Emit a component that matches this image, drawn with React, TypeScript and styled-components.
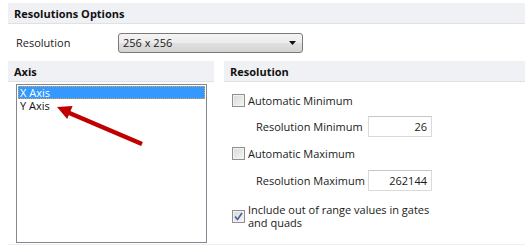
import React from 'react'
import styled, { createGlobalStyle } from 'styled-components'

const GlobalStyle = createGlobalStyle`
    html, body {
        margin: 0;
        padding: 0;
        background: #fff;
    }
    body {
        font-family: "Open Sans", "Noto Sans", sans-serif;
        font-size: 11px;
        color: #1a1a1a;
    }
`;

const Page = styled.div`
    width: 531px;
    height: 245px;
    padding: 3px 6px 0 8px;
    box-sizing: border-box;
    display: flex;
    flex-direction: column;
    overflow: hidden;
`;

const SectionHeader = styled.div`
    flex: none;
    height: 20px;
    background: #f0f1f5;
    border-bottom: 1px solid #dfe1e6;
    display: flex;
    align-items: center;
    padding-left: 6px;
    font-weight: bold;
    color: #111;
`;

const ResolutionRow = styled.div`
    flex: none;
    display: flex;
    align-items: center;
    height: 37px;
    padding-left: 8px;
`;

const RowLabel = styled.span`
    width: 102px;
`;

const Select = styled.div`
    width: 185px;
    height: 20px;
    box-sizing: border-box;
    border: 1px solid #7a7a7a;
    border-radius: 3px;
    background: linear-gradient(#f4f4f4, #ececec 50%, #e0e0e0 51%, #d4d4d4);
    display: flex;
    align-items: center;
    justify-content: space-between;
    padding: 0 6px 0 4px;
`;

const Columns = styled.div`
    flex: none;
    display: flex;
    gap: 10px;
    height: 184px;
    border-bottom: 1px solid #eceef1;
    box-sizing: border-box;
`;

const Column = styled.div<{ w: number }>`
    width: ${props => props.w}px;
    display: flex;
    flex-direction: column;
`;

const ListBox = styled.div`
    position: relative;
    margin: 2px 7px 0 8px;
    height: 159px;
    border: 1px solid #828790;
    padding: 1px;
    box-sizing: border-box;
`;

const ListItem = styled.div<{ selected?: boolean }>`
    height: 13px;
    line-height: 13px;
    padding-left: 2px;
    overflow: hidden;
    background: ${props => props.selected ? '#3399ff' : 'transparent'};
    color: ${props => props.selected ? '#fff' : '#111'};
    outline: ${props => props.selected ? '1px dotted #e8a040' : 'none'};
    outline-offset: -1px;
`;

const Arrow = styled.svg`
    position: absolute;
    left: -1px;
    top: -1px;
    pointer-events: none;
`;

const Options = styled.div`
    display: flex;
    flex-direction: column;
    padding: 11px 0 0 8px;
`;

const CheckRow = styled.label<{ top?: number }>`
    display: flex;
    align-items: center;
    gap: 3px;
    margin-top: ${props => props.top ?? 0}px;
    line-height: 15px;
    white-space: nowrap;
`;

const Box = styled.span`
    width: 13px;
    height: 13px;
    box-sizing: border-box;
    border: 1px solid #8f8f8f;
    background: linear-gradient(135deg, #d8d8d8, #f6f6f6);
    box-shadow: inset 0 0 0 1px #f2f2f2;
    flex: none;
    display: flex;
    align-items: center;
    justify-content: center;
`;

const CheckText = styled.span`
    white-space: normal;
    width: 190px;
    line-height: 13px;
`;

const FieldRow = styled.div<{ top: number }>`
    display: flex;
    align-items: center;
    margin-top: ${props => props.top}px;
    padding-left: 24px;
    white-space: nowrap;
`;

const FieldLabel = styled.span`
    width: 112px;
`;

const NumberInput = styled.div`
    width: 64px;
    height: 21px;
    box-sizing: border-box;
    border: 1px solid #dadada;
    border-top-color: #c6c6c6;
    text-align: right;
    padding-right: 4px;
    line-height: 19px;
`;

function Check({ checked }: { checked?: boolean }) {
    return (
        <Box>
            {checked && (
                <svg width="9" height="9" viewBox="0 0 9 9">
                    <path d="M1 4.5 L3.5 7.5 L8 1" fill="none" stroke="#4a5f97" strokeWidth="1.6" />
                </svg>
            )}
        </Box>
    )
}

export default function App() {
    return (
        <>
            <GlobalStyle />
            <Page>
                <SectionHeader>Resolutions Options</SectionHeader>
                <ResolutionRow>
                    <RowLabel>Resolution</RowLabel>
                    <Select>
                        <span>256 x 256</span>
                        <svg width="7" height="4" viewBox="0 0 7 4">
                            <polygon points="0,0 7,0 3.5,4" fill="#111" />
                        </svg>
                    </Select>
                </ResolutionRow>
                <Columns>
                    <Column w={206}>
                        <SectionHeader>Axis</SectionHeader>
                        <ListBox>
                            <ListItem selected>X Axis</ListItem>
                            <ListItem>Y Axis</ListItem>
                            <Arrow width="150" height="80" viewBox="0 0 150 80">
                                <line x1="51" y1="28" x2="126" y2="60" stroke="#c00000" strokeWidth="4.5" />
                                <polygon points="41,23 51.2,34.9 56.6,22.1" fill="#c00000" />
                            </Arrow>
                        </ListBox>
                    </Column>
                    <Column w={301}>
                        <SectionHeader>Resolution</SectionHeader>
                        <Options>
                            <CheckRow>
                                <Check />
                                <span>Automatic Minimum</span>
                            </CheckRow>
                            <FieldRow top={8}>
                                <FieldLabel>Resolution Minimum</FieldLabel>
                                <NumberInput>26</NumberInput>
                            </FieldRow>
                            <CheckRow top={9}>
                                <Check />
                                <span>Automatic Maximum</span>
                            </CheckRow>
                            <FieldRow top={9}>
                                <FieldLabel>Resolution Maximum</FieldLabel>
                                <NumberInput>262144</NumberInput>
                            </FieldRow>
                            <CheckRow top={12}>
                                <Check checked />
                                <CheckText>Include out of range values in gates and quads</CheckText>
                            </CheckRow>
                        </Options>
                    </Column>
                </Columns>
            </Page>
        </>
    )
}
